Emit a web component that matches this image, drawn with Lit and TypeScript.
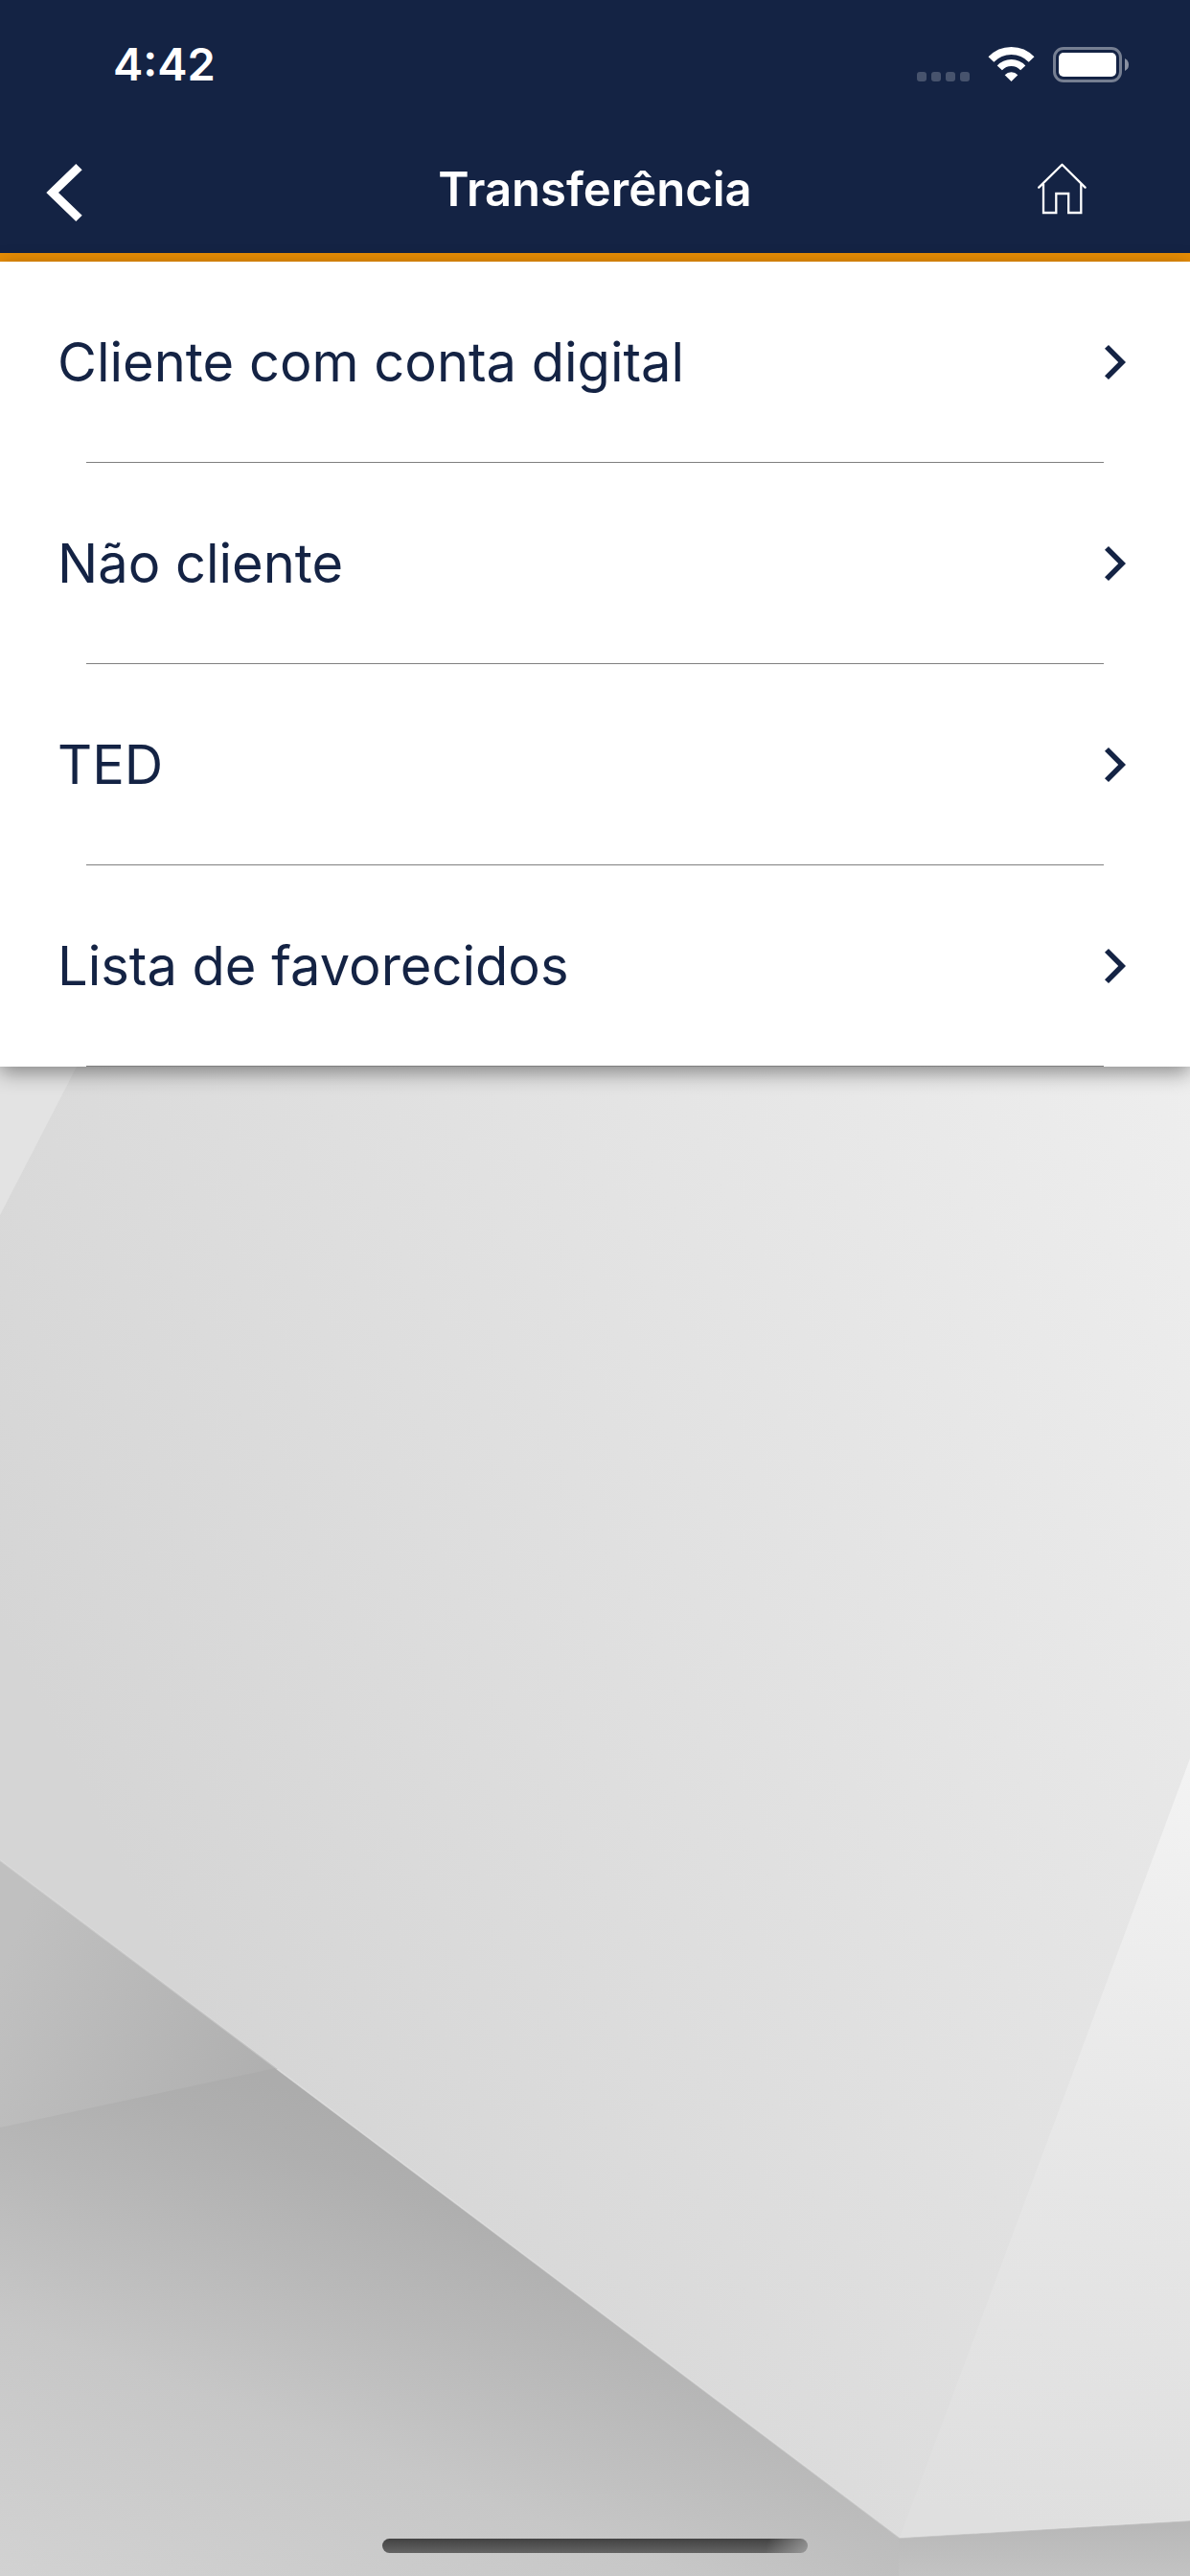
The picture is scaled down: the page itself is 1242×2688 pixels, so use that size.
import { LitElement, html, css } from "lit";
import { customElement, property } from "lit/decorators.js";

@customElement("status-bar")
export class StatusBar extends LitElement {
  static styles = css`
    :host {
      display: flex;
      align-items: center;
      justify-content: space-between;
      box-sizing: border-box;
      min-height: 132px;
      padding: 2px 64px 0 118px;
      color: #fff;
    }
    .time {
      font-size: 47px;
      font-weight: 600;
      line-height: 56px;
    }
    .indicators {
      display: flex;
      align-items: center;
    }
    .wifi {
      margin: 0 19px;
    }
    svg {
      display: block;
    }
  `;

  @property() time = "";

  render() {
    return html`
      <span class="time">${this.time}</span>
      <span class="indicators">
        <svg width="55" height="38" viewBox="0 0 55 38" fill="#fff" fill-opacity="0.22" aria-hidden="true">
          <rect x="0" y="27" width="10" height="10" rx="3" />
          <rect x="15" y="27" width="10" height="10" rx="3" />
          <rect x="30" y="27" width="10" height="10" rx="3" />
          <rect x="45" y="27" width="10" height="10" rx="3" />
        </svg>
        <svg class="wifi" width="49" height="38" viewBox="0 0 49 38" fill="none" stroke="#fff" aria-hidden="true">
          <path d="M3.4 14.1A29 29 0 0 1 45.6 14.1" stroke-width="8" />
          <path d="M12.3 22.9A16.5 16.5 0 0 1 36.7 22.9" stroke-width="7" />
          <path d="M24.5 37L17.7 30.2A9.5 9.5 0 0 1 31.3 30.2Z" fill="#fff" stroke="none" />
        </svg>
        <svg width="79" height="38" viewBox="0 0 79 38" aria-hidden="true">
          <rect x="1.5" y="2.5" width="69" height="34" rx="9.5" fill="none" stroke="#fff" stroke-opacity="0.42" stroke-width="3" />
          <rect x="6" y="7" width="60" height="25" rx="5" fill="#fff" />
          <path d="M75 13Q79 15 79 19.500Q79 24 75 26Z" fill="#fff" fill-opacity="0.5" />
        </svg>
      </span>
    `;
  }
}

@customElement("nav-header")
export class NavHeader extends LitElement {
  static styles = css`
    :host {
      display: grid;
      grid-template-columns: 1fr auto 1fr;
      align-items: center;
      box-sizing: border-box;
      min-height: 141px;
      border-bottom: 9px solid #e98e05;
      color: #fff;
    }
    .title {
      margin: 0;
      font-size: 49px;
      font-weight: 600;
      line-height: 60px;
    }
    .back,
    .home {
      display: block;
      padding: 24px;
      border: 0;
      background: none;
      color: inherit;
      cursor: pointer;
    }
    .back {
      justify-self: start;
      margin-left: 24px;
    }
    .home {
      justify-self: end;
      margin-right: 84px;
    }
    svg {
      display: block;
    }
  `;

  @property() heading = "";

  render() {
    return html`
      <button class="back" type="button" aria-label="Voltar">
        <svg width="38" height="66" viewBox="0 0 38 66" fill="currentColor" aria-hidden="true">
          <path d="M31.300 6L37.700 12.200L13 36L37.700 59.800L31.300 66L0.300 36Z" />
        </svg>
      </button>
      <h1 class="title">${this.heading}</h1>
      <a class="home" href="#inicio" aria-label="Início">
        <svg width="52" height="56" viewBox="0 0 52 56" fill="none" stroke="currentColor" stroke-width="2.300" stroke-linecap="round" aria-hidden="true">
          <path d="M2.200 25.600L26.500 1.800L50.600 25.600" stroke-linejoin="round" />
          <path d="M7 22V52H20.300V32H33.200V52H46.300V22" stroke-linecap="butt" />
        </svg>
      </a>
    `;
  }
}

@customElement("option-list")
export class OptionList extends LitElement {
  static styles = css`
    :host {
      display: block;
      position: relative;
      z-index: 1;
      background: #fff;
      box-shadow: 0 6px 20px rgba(0, 0, 0, 0.42);
      color: #142344;
    }
    .list {
      margin: 0;
      padding: 0;
      list-style: none;
    }
    .item::after {
      content: "";
      display: block;
      height: 1px;
      margin: 0 90px;
      background: #808080;
    }
    .option {
      display: flex;
      align-items: center;
      justify-content: space-between;
      width: 100%;
      min-height: 209px;
      padding: 0 67px 0 60px;
      border: 0;
      background: none;
      color: inherit;
      font-family: inherit;
      font-size: 56px;
      line-height: 70px;
      text-align: left;
      cursor: pointer;
    }
    svg {
      display: block;
      flex: none;
    }
  `;

  @property({ attribute: false }) options: string[] = [];

  render() {
    return html`
      <ul class="list">
        ${this.options.map(
          (label) => html`
            <li class="item">
              <button class="option" type="button">
                <span>${label}</span>
                <svg width="22" height="36" viewBox="0 0 22 36" fill="currentColor" aria-hidden="true">
                  <path d="M4 0L22 18L4 36L0 32.300L14.200 18L0 3.700Z" />
                </svg>
              </button>
            </li>
          `,
        )}
      </ul>
    `;
  }
}

@customElement("paper-backdrop")
export class PaperBackdrop extends LitElement {
  static styles = css`
    :host {
      display: grid;
      position: relative;
      min-height: 400px;
      background: #c8c8c8;
    }
    .art {
      display: block;
      position: absolute;
      inset: 0;
      width: 100%;
      height: 100%;
    }
    .home-bar {
      position: relative;
      align-self: end;
      justify-self: center;
      width: 444px;
      max-width: 60%;
      height: 15px;
      margin-bottom: 24px;
      border-radius: 8px;
      background:
        linear-gradient(105deg, transparent 90%, rgba(190, 190, 190, 0.6)),
        linear-gradient(#424242, #646464);
    }
  `;

  render() {
    return html`
      <svg class="art" viewBox="0 1113 1242 1575" preserveAspectRatio="none" aria-hidden="true">
        <defs>
          <linearGradient id="panel" gradientUnits="userSpaceOnUse" x1="0" y1="1700" x2="1380" y2="1000">
            <stop offset="0" stop-color="#d5d5d5" />
            <stop offset="1" stop-color="#f1f1f1" />
          </linearGradient>
          <linearGradient id="facet" gradientUnits="userSpaceOnUse" x1="1242" y1="1840" x2="1100" y2="2640">
            <stop offset="0" stop-color="#f3f3f3" />
            <stop offset="0.5" stop-color="#e7e7e7" />
            <stop offset="1" stop-color="#dfdfdf" />
          </linearGradient>
          <linearGradient id="wedge" gradientUnits="userSpaceOnUse" x1="0" y1="2060" x2="270" y2="2170">
            <stop offset="0" stop-color="#c0c0c0" />
            <stop offset="1" stop-color="#b0b0b0" />
          </linearGradient>
          <linearGradient id="floor" gradientUnits="userSpaceOnUse" x1="330" y1="2190" x2="120" y2="2754">
            <stop offset="0" stop-color="#acacac" />
            <stop offset="0.1" stop-color="#afafaf" />
            <stop offset="0.3" stop-color="#b9b9b9" />
            <stop offset="0.43" stop-color="#c0c0c0" />
            <stop offset="0.55" stop-color="#c7c7c7" />
            <stop offset="0.7" stop-color="#cbcbcb" />
            <stop offset="1" stop-color="#d3d3d3" />
          </linearGradient>
          <linearGradient id="shade" gradientUnits="userSpaceOnUse" x1="0" y1="2636" x2="0" y2="2688">
            <stop offset="0" stop-color="#b8b8b8" />
            <stop offset="1" stop-color="#c3c3c3" />
          </linearGradient>
        </defs>
        <rect x="0" y="1113" width="1242" height="1575" fill="url(#panel)" />
        <path d="M0 1113H80L0 1268Z" fill="#e3e3e3" />
        <path d="M0 1941L290 2159L0 2221Z" fill="url(#wedge)" />
        <path d="M0 2220L287 2158L939 2648V2688H0Z" fill="url(#floor)" />
        <path d="M938 2648L1242 2630V2688H938Z" fill="url(#shade)" />
        <path d="M1242 1835L939 2648L1242 2630Z" fill="url(#facet)" />
        <path d="M0 1941L939 2648L1242 2630" fill="none" stroke="#e4e4e4" stroke-opacity="0.35" stroke-width="2" />
      </svg>
      <div class="home-bar"></div>
    `;
  }
}

@customElement("app-root")
export class AppRoot extends LitElement {
  static styles = css`
    :host {
      display: flex;
      flex-direction: column;
      min-height: 100vh;
      font-family: Inter, "Liberation Sans", sans-serif;
    }
    .top {
      background: #142344;
    }
    .backdrop {
      flex: 1;
    }
  `;

  private options = ["Cliente com conta digital", "Não cliente", "TED", "Lista de favorecidos"];

  render() {
    return html`
      <header class="top">
        <status-bar time="4:42"></status-bar>
        <nav-header heading="Transferência"></nav-header>
      </header>
      <option-list .options=${this.options}></option-list>
      <paper-backdrop class="backdrop"></paper-backdrop>
    `;
  }
}
